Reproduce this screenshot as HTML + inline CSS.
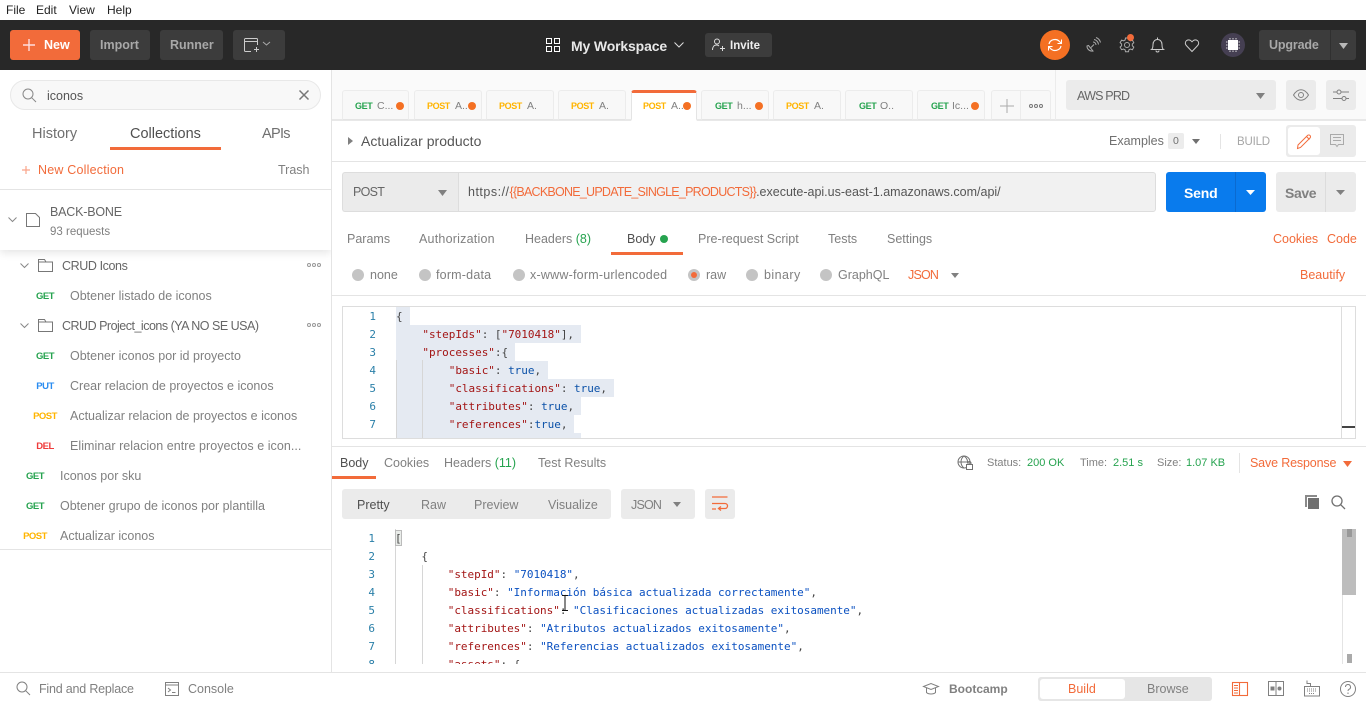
<!DOCTYPE html>
<html><head><meta charset="utf-8"><title>Postman</title>
<style>
*{box-sizing:border-box}
html,body{margin:0;padding:0;width:1366px;height:705px;overflow:hidden;background:#fff}
body{position:relative;font-family:"Liberation Sans",sans-serif;font-size:12.5px;color:#808080}
.t{position:absolute;white-space:nowrap;line-height:18px;height:18px}
.b{position:absolute}
svg{position:absolute;overflow:visible}
.m{font-weight:bold;font-size:9.5px;letter-spacing:-.5px;text-align:center;width:40px;margin-top:1px}
.h{font-size:9px !important;letter-spacing:-.4px}
.g{color:#26a34f}.y{color:#ffb400}.u{color:#2a8cf0}.r{color:#ef3b3b}
.o{color:#f26b3a}
.tab{position:absolute;top:90px;height:30px;background:#f8f8f8;border:1px solid #ececec;border-bottom:1px solid #e4e4e4;border-radius:3px 3px 0 0}
.dot{position:absolute;width:8px;height:8px;border-radius:50%;background:#f47023;top:102px}
.rad{position:absolute;width:12px;height:12px;border-radius:50%;background:#c4c4c4;top:269px}
.c{position:absolute;font-family:"DejaVu Sans Mono","Liberation Mono",monospace;font-size:11px;letter-spacing:-.03px;line-height:18px;white-space:pre;height:18px;transform:translateY(1px)}
.n{position:absolute;font-family:"DejaVu Sans Mono","Liberation Mono",monospace;font-size:11px;line-height:18px;text-align:right;width:20px;color:#2a7fa8;transform:translateY(1px)}
.k{color:#a31515}.s{color:#0b51c1}.v{color:#0b51a8}.p{color:#444}
.sel{position:absolute;background:#e5eaf2;height:18px}
</style></head><body>

<!-- menu -->
<div class="t" style="left:6px;top:1px;color:#222;font-size:12px">File</div>
<div class="t" style="left:36px;top:1px;color:#222;font-size:12px">Edit</div>
<div class="t" style="left:69px;top:1px;color:#222;font-size:12px">View</div>
<div class="t" style="left:107px;top:1px;color:#222;font-size:12px">Help</div>

<!-- header -->
<div class="b" style="left:0;top:20px;width:1366px;height:50px;background:#282828"></div>
<div class="b" style="left:10px;top:30px;width:70px;height:30px;background:#f26b3a;border-radius:3px"></div>
<svg style="left:23px;top:39px" width="12" height="12"><path d="M6 0V12M0 6H12" stroke="#fdd" stroke-width="1.400"/></svg>
<div class="t" style="left:44px;top:36px;color:#fff;font-weight:bold;font-size:12.500px">New</div>
<div class="b" style="left:90px;top:30px;width:60px;height:30px;background:#3c3c3c;border-radius:3px"></div>
<div class="t" style="left:100px;top:36px;color:#a8a8a8;font-weight:bold;font-size:12.500px">Import</div>
<div class="b" style="left:160px;top:30px;width:63px;height:30px;background:#3c3c3c;border-radius:3px"></div>
<div class="t" style="left:170px;top:36px;color:#a8a8a8;font-weight:bold;font-size:12.500px">Runner</div>
<div class="b" style="left:233px;top:30px;width:52px;height:30px;background:#3c3c3c;border-radius:3px"></div>
<svg style="left:244px;top:38px" width="34" height="14" fill="none" stroke="#ccc"><path d="M7 13.500H1.500a1 1 0 0 1-1-1V1.500a1 1 0 0 1 1-1h11a1 1 0 0 1 1 1V7M.5 3.500h13M10 11.500h5M12.500 9v5"/><path d="M19 4l3.500 3 3.500-3" stroke="#aaa"/></svg>

<svg style="left:546px;top:38px" width="14" height="14" fill="none" stroke="#fff"><rect x=".5" y=".5" width="5" height="5"/><rect x="8.500" y=".5" width="5" height="5"/><rect x=".5" y="8.500" width="5" height="5"/><rect x="8.500" y="8.500" width="5" height="5"/></svg>
<div class="t" style="left:571px;top:37px;color:#e8e8e8;font-weight:bold;font-size:14px;letter-spacing:-.15px">My Workspace</div>
<svg style="left:674px;top:42px" width="10" height="6" fill="none" stroke="#ddd"><path d="M.5.5l4.500 4.500 4.500-4.500"/></svg>
<div class="b" style="left:705px;top:33px;width:67px;height:24px;background:#3c3c3c;border-radius:3px"></div>
<svg style="left:712px;top:38px" width="14" height="14" fill="none" stroke="#ddd"><circle cx="5" cy="3.500" r="2.500"/><path d="M.5 12c0-3 1.500-5 4-5 1 0 2 .4 2.500 1M10.500 8v5M8 10.500h5"/></svg>
<div class="t" style="left:730px;top:37px;color:#eee;font-weight:bold;font-size:11.500px">Invite</div>

<div class="b" style="left:1040px;top:30px;width:30px;height:30px;border-radius:50%;background:#f47023"></div>
<svg style="left:1047px;top:38px" width="16" height="14" fill="none" stroke="#fff" stroke-width="1.200"><path d="M2 6a6 5.500 0 0 1 10.500-2.500L14 5M14 8a6 5.500 0 0 1-10.500 2.500L2 9"/><path d="M14.500 1.500V5.500H10.500M1.500 12.500V8.500H5.500" stroke-width="1"/></svg>
<svg style="left:1085px;top:37px" width="16" height="16" fill="none" stroke="#aaa"><path d="M2 9a5 5 0 0 0 6 5L3.500 8.500zM6 10.500l3-3"/><path d="M8 5a3 3 0 0 1 3 3M9 2.500a5.500 5.500 0 0 1 4.500 5M11 .5a7 7 0 0 1 4.500 5"/></svg>
<svg style="left:1119px;top:37px" width="16" height="16" viewBox="0 0 16 16" fill="none" stroke="#aaa"><circle cx="8" cy="8" r="2.500"/><path d="M6.500 1h3l.4 2 1.500.8 2-.7 1.400 2.600-1.500 1.300v1.800l1.500 1.300-1.400 2.600-2-.7-1.500.8-.4 2h-3l-.4-2-1.500-.8-2 .7L1.100 10.100l1.500-1.300V7L1.100 5.700 2.600 3.100l2 .7 1.500-.8z"/></svg>
<div class="b" style="left:1127px;top:34px;width:7px;height:7px;border-radius:50%;background:#f26b3a"></div>
<svg style="left:1151px;top:37px" width="13" height="16" fill="none" stroke="#ccc"><path d="M.5 12.500c1.500-1 1.500-3 1.500-5 0-3 2-5 4.500-5s4.500 2 4.500 5c0 2 0 4 1.500 5zM6.500 2.500V.5M5 13.500a1.500 1.500 0 0 0 3 0"/></svg>
<svg style="left:1185px;top:39px" width="14" height="13" fill="none" stroke="#ccc"><path d="M7 12.500L1.300 6.500a3.300 3.300 0 0 1 0-4.700 3.300 3.300 0 0 1 4.700 0L7 2.800l1-1a3.300 3.300 0 0 1 4.700 0 3.300 3.300 0 0 1 0 4.700z"/></svg>
<div class="b" style="left:1221px;top:33px;width:24px;height:24px;border-radius:50%;background:#453f52"></div>
<svg style="left:1226px;top:38px" width="14" height="14"><rect x="2" y="2" width="10" height="10" fill="#fff"/><path d="M4 0v1.500M7 0v1.500M10 0v1.500M4 12.500v1.500M7 12.500v1.500M10 12.500v1.500M0 4h1.500M0 7h1.500M0 10h1.500M12.500 4h1.500M12.500 7h1.500M12.500 10h1.500" stroke="#ddd"/></svg>
<div class="b" style="left:1259px;top:30px;width:97px;height:30px;background:#3c3c3c;border-radius:3px"></div>
<div class="b" style="left:1330px;top:30px;width:1px;height:30px;background:#303030"></div>
<div class="t" style="left:1269px;top:36px;color:#a8a8a8;font-weight:bold;font-size:12.500px;letter-spacing:-.15px">Upgrade</div>
<svg style="left:1339px;top:43px" width="9" height="6"><path d="M0 0H9L4.500 6z" fill="#b8b8b8"/></svg>

<!-- sidebar -->
<div class="b" style="left:331px;top:70px;width:1px;height:602px;background:#e4e4e4"></div>
<div class="b" style="left:10px;top:80px;width:311px;height:30px;background:#f8f8f8;border:1px solid #e8e8e8;border-radius:15px"></div>
<svg style="left:22px;top:88px" width="15" height="15" fill="none" stroke="#888"><circle cx="6" cy="6" r="5"/><path d="M9.800 9.800L14 14"/></svg>
<div class="t" style="left:47px;top:87px;color:#555;font-size:12.500px">iconos</div>
<svg style="left:299px;top:90px" width="10" height="10"><path d="M.5.5l9 9M9.500.5l-9 9" stroke="#777" stroke-width="1.500"/></svg>
<div class="t" style="left:32px;top:125px;font-size:14.500px;color:#707070">History</div>
<div class="t" style="left:130px;top:125px;font-size:14.500px;color:#505050">Collections</div>
<div class="t" style="left:262px;top:125px;font-size:14.500px;color:#707070;letter-spacing:-.7px">APIs</div>
<div class="b" style="left:110px;top:147px;width:111px;height:3px;background:#f26b3a"></div>
<svg style="left:22px;top:166px" width="8" height="8"><path d="M4 0V8M0 4H8" stroke="#f9a58a" stroke-width="1.200"/></svg>
<div class="t o" style="left:38px;top:161px;font-size:12.500px;letter-spacing:.2px">New Collection</div>
<div class="t" style="left:278px;top:161px;font-size:12.500px">Trash</div>
<div class="b" style="left:0;top:189px;width:331px;height:1px;background:#e4e4e4"></div>
<div class="b" style="left:0;top:190px;width:331px;height:60px;background:#fff;box-shadow:0 3px 8px rgba(0,0,0,.1);clip-path:inset(0 0 -14px 0)"></div>
<svg style="left:8px;top:217px" width="9" height="5" fill="none" stroke="#888"><path d="M.5.5l4 4 4-4"/></svg>
<svg style="left:26px;top:213px" width="14" height="14" fill="none" stroke="#777"><path d="M.5.500h9l4 4v9h-13z"/></svg>
<div class="t" style="left:50px;top:203px;font-size:12.500px;color:#666;letter-spacing:-.2px">BACK-BONE</div>
<div class="t" style="left:50px;top:223px;font-size:11.500px;color:#808080">93 requests</div>

<svg style="left:20px;top:263px" width="9" height="5" fill="none" stroke="#888"><path d="M.5.5l4 4 4-4"/></svg>
<svg style="left:38px;top:259px" width="15" height="13" fill="none" stroke="#777"><path d="M.5 12.500V.5h6l1.500 2.500h6.500v9.500zM.5 3h7.500"/></svg>
<div class="t" style="left:62px;top:257px;color:#666;letter-spacing:-.4px">CRUD Icons</div>
<svg style="left:307px;top:263px" width="15" height="4" fill="none" stroke="#999"><circle cx="2" cy="2" r="1.500"/><circle cx="7" cy="2" r="1.500"/><circle cx="12" cy="2" r="1.500"/></svg>
<div class="t m g" style="left:25px;top:287px">GET</div><div class="t" style="left:70px;top:287px">Obtener listado de iconos</div>
<svg style="left:20px;top:323px" width="9" height="5" fill="none" stroke="#888"><path d="M.5.5l4 4 4-4"/></svg>
<svg style="left:38px;top:319px" width="15" height="13" fill="none" stroke="#777"><path d="M.5 12.500V.5h6l1.500 2.500h6.500v9.500zM.5 3h7.500"/></svg>
<div class="t" style="left:62px;top:317px;color:#666;letter-spacing:-.5px">CRUD Project_icons (YA NO SE USA)</div>
<svg style="left:307px;top:323px" width="15" height="4" fill="none" stroke="#999"><circle cx="2" cy="2" r="1.500"/><circle cx="7" cy="2" r="1.500"/><circle cx="12" cy="2" r="1.500"/></svg>
<div class="t m g" style="left:25px;top:347px">GET</div><div class="t" style="left:70px;top:347px">Obtener iconos por id proyecto</div>
<div class="t m u" style="left:25px;top:377px">PUT</div><div class="t" style="left:70px;top:377px">Crear relacion de proyectos e iconos</div>
<div class="t m y" style="left:25px;top:407px">POST</div><div class="t" style="left:70px;top:407px">Actualizar relacion de proyectos e iconos</div>
<div class="t m r" style="left:25px;top:437px">DEL</div><div class="t" style="left:70px;top:437px;letter-spacing:.05px">Eliminar relacion entre proyectos e icon...</div>
<div class="t m g" style="left:15px;top:467px">GET</div><div class="t" style="left:60px;top:467px">Iconos por sku</div>
<div class="t m g" style="left:15px;top:497px">GET</div><div class="t" style="left:60px;top:497px">Obtener grupo de iconos por plantilla</div>
<div class="t m y" style="left:15px;top:527px">POST</div><div class="t" style="left:60px;top:527px">Actualizar iconos</div>
<div class="b" style="left:0;top:549px;width:331px;height:1px;background:#e4e4e4"></div>

<!-- tab strip -->
<div class="b" style="left:332px;top:70px;width:1034px;height:50px;background:#fafafa"></div>
<div class="b" style="left:332px;top:119px;width:1034px;height:2px;background:#e8e8e8"></div>
<div class="b" style="left:1055px;top:70px;width:1px;height:50px;background:#ececec"></div>
<div class="tab" style="left:342px;width:67px"></div>
<div class="tab" style="left:414px;width:68px"></div>
<div class="tab" style="left:486px;width:68px"></div>
<div class="tab" style="left:558px;width:68px"></div>
<div class="tab" style="left:631px;width:66px;background:#fff;border-color:#e4e4e4;border-top:3px solid #f26b3a;border-bottom:2px solid #fff;height:31px"></div>
<div class="tab" style="left:701px;width:68px"></div>
<div class="tab" style="left:773px;width:68px"></div>
<div class="tab" style="left:845px;width:68px"></div>
<div class="tab" style="left:917px;width:68px"></div>
<div class="tab" style="left:991px;width:60px"></div>
<div class="b" style="left:1020px;top:91px;width:1px;height:28px;background:#ececec"></div>
<svg style="left:1000px;top:99px" width="14" height="14"><path d="M7 0V14M0 7H14" stroke="#aaa"/></svg>
<svg style="left:1029px;top:104px" width="15" height="4" fill="none" stroke="#777"><circle cx="2" cy="2" r="1.500"/><circle cx="7" cy="2" r="1.500"/><circle cx="12" cy="2" r="1.500"/></svg>
<div class="t g h" style="left:355px;top:97px;font-weight:bold">GET</div><div class="t" style="left:377px;top:97px;font-size:10.500px">C...</div><div class="dot" style="left:396px"></div>
<div class="t y h" style="left:427px;top:97px;font-weight:bold">POST</div><div class="t" style="left:455px;top:97px;font-size:10.500px">A..</div><div class="dot" style="left:468px"></div>
<div class="t y h" style="left:499px;top:97px;font-weight:bold">POST</div><div class="t" style="left:527px;top:97px;font-size:10.500px">A.</div>
<div class="t y h" style="left:571px;top:97px;font-weight:bold">POST</div><div class="t" style="left:599px;top:97px;font-size:10.500px">A.</div>
<div class="t y h" style="left:643px;top:97px;font-weight:bold">POST</div><div class="t" style="left:671px;top:97px;font-size:10.500px">A..</div><div class="dot" style="left:683px"></div>
<div class="t g h" style="left:715px;top:97px;font-weight:bold">GET</div><div class="t" style="left:737px;top:97px;font-size:10.500px">h...</div><div class="dot" style="left:755px"></div>
<div class="t y h" style="left:786px;top:97px;font-weight:bold">POST</div><div class="t" style="left:814px;top:97px;font-size:10.500px">A.</div>
<div class="t g h" style="left:859px;top:97px;font-weight:bold">GET</div><div class="t" style="left:880px;top:97px;font-size:10.500px">O..</div>
<div class="t g h" style="left:931px;top:97px;font-weight:bold">GET</div><div class="t" style="left:952px;top:97px;font-size:10.500px">Ic...</div><div class="dot" style="left:971px"></div>

<div class="b" style="left:1066px;top:80px;width:210px;height:30px;background:#ebebeb;border-radius:3px"></div>
<div class="t" style="left:1077px;top:87px;color:#666;letter-spacing:-.8px">AWS PRD</div>
<svg style="left:1256px;top:93px" width="9" height="6"><path d="M0 0H9L4.500 6z" fill="#808080"/></svg>
<div class="b" style="left:1286px;top:80px;width:30px;height:30px;background:#ebebeb;border-radius:3px"></div>
<svg style="left:1293px;top:89px" width="16" height="12" fill="none" stroke="#808080"><path d="M.5 6C3 2 5.500.8 8 .8s5 1.200 7.500 5.200C13 10 10.500 11.200 8 11.200S3 10 .5 6z"/><circle cx="8" cy="6" r="2.500"/></svg>
<div class="b" style="left:1326px;top:80px;width:30px;height:30px;background:#ebebeb;border-radius:3px"></div>
<svg style="left:1333px;top:89px" width="16" height="13" fill="none" stroke="#808080"><path d="M0 3h4M8 3h8M0 9.500h9M13 9.500h3"/><circle cx="6" cy="3" r="2"/><circle cx="11" cy="9.500" r="2"/></svg>

<!-- name row -->
<svg style="left:348px;top:137px" width="5" height="8"><path d="M0 0V8L5 4z" fill="#808080"/></svg>
<div class="t" style="left:361px;top:132px;font-size:14px;color:#555;letter-spacing:.03px">Actualizar producto</div>
<div class="t" style="left:1109px;top:132px;color:#707070">Examples</div>
<div class="b" style="left:1168px;top:133px;width:16px;height:16px;background:#ececec;border-radius:2px"></div>
<div class="t" style="left:1173px;top:132px;font-size:10.500px;color:#707070">0</div>
<svg style="left:1192px;top:139px" width="8" height="5"><path d="M0 0H8L4 5z" fill="#707070"/></svg>
<div class="b" style="left:1220px;top:134px;width:1px;height:15px;background:#e4e4e4"></div>
<div class="t" style="left:1237px;top:133px;font-size:11.500px;color:#a6a6a6;letter-spacing:-.2px">BUILD</div>
<div class="b" style="left:1286px;top:125px;width:70px;height:32px;background:#ebebeb;border-radius:3px"></div>
<div class="b" style="left:1288px;top:127px;width:32px;height:28px;background:#fff;border-radius:3px"></div>
<svg style="left:1297px;top:134px" width="15" height="15" fill="none" stroke="#f26b3a"><path d="M1 11L10.500 1.500a1.500 1.500 0 0 1 2.500 2.500L3.500 13.500.5 14.500zM9.500 2.500l3 3"/></svg>
<svg style="left:1330px;top:134px" width="14" height="14" fill="none" stroke="#aaa"><path d="M.5.500h13v10h-5l-1.500 2-1.500-2h-5zM3 3.500h8M3 6.500h8"/></svg>
<div class="b" style="left:332px;top:161px;width:1034px;height:1px;background:#e4e4e4"></div>

<!-- url row -->
<div class="b" style="left:342px;top:172px;width:116px;height:40px;background:#ebebeb;border:1px solid #ddd;border-right:0;border-radius:3px 0 0 3px"></div>
<div class="t" style="left:353px;top:183px;color:#666;letter-spacing:-.7px">POST</div>
<svg style="left:438px;top:190px" width="9" height="6"><path d="M0 0H9L4.500 6z" fill="#808080"/></svg>
<div class="b" style="left:458px;top:172px;width:698px;height:40px;background:#f1f1f1;border:1px solid #ddd;border-radius:0 3px 3px 0"></div>
<div class="t" style="left:468px;top:183px;color:#555;font-size:12.500px"><span style="letter-spacing:.5px">https://</span><span class="o" style="letter-spacing:-.75px">{{BACKBONE_UPDATE_SINGLE_PRODUCTS}}</span>.execute-api.us-east-1.amazonaws.com/api/</div>
<div class="b" style="left:1166px;top:172px;width:100px;height:40px;background:#097bed;border-radius:3px"></div>
<div class="b" style="left:1235px;top:172px;width:1px;height:40px;background:#0a6ad0"></div>
<div class="t" style="left:1184px;top:184px;color:#fff;font-weight:bold;font-size:14px;letter-spacing:-.2px">Send</div>
<svg style="left:1246px;top:190px" width="9" height="5"><path d="M0 0H9L4.500 5z" fill="#fff"/></svg>
<div class="b" style="left:1276px;top:172px;width:80px;height:40px;background:#ebebeb;border-radius:3px"></div>
<div class="b" style="left:1325px;top:172px;width:1px;height:40px;background:#dcdcdc"></div>
<div class="t" style="left:1285px;top:184px;color:#808080;font-weight:bold;font-size:14px;letter-spacing:-.4px">Save</div>
<svg style="left:1336px;top:190px" width="9" height="5"><path d="M0 0H9L4.500 5z" fill="#808080"/></svg>

<!-- request tabs -->
<div class="t" style="left:347px;top:230px">Params</div>
<div class="t" style="left:419px;top:230px;letter-spacing:.22px">Authorization</div>
<div class="t" style="left:525px;top:230px">Headers <span class="g">(8)</span></div>
<div class="t" style="left:627px;top:230px;color:#505050">Body</div>
<div class="b" style="left:660px;top:235px;width:8px;height:8px;border-radius:50%;background:#26a34f"></div>
<div class="t" style="left:698px;top:230px">Pre-request Script</div>
<div class="t" style="left:828px;top:230px">Tests</div>
<div class="t" style="left:887px;top:230px">Settings</div>
<div class="t o" style="left:1273px;top:230px">Cookies</div>
<div class="t o" style="left:1327px;top:230px">Code</div>
<div class="b" style="left:611px;top:252px;width:72px;height:3px;background:#f26b3a"></div>

<div class="rad" style="left:352px"></div><div class="t" style="left:370px;top:266px">none</div>
<div class="rad" style="left:419px"></div><div class="t" style="left:436px;top:266px;letter-spacing:.2px">form-data</div>
<div class="rad" style="left:513px"></div><div class="t" style="left:530px;top:266px;letter-spacing:.22px">x-www-form-urlencoded</div>
<div class="rad" style="left:688px"></div><div class="b" style="left:691px;top:272px;width:6px;height:6px;border-radius:50%;background:#f26b3a"></div><div class="t" style="left:706px;top:266px">raw</div>
<div class="rad" style="left:746px"></div><div class="t" style="left:764px;top:266px;letter-spacing:.45px">binary</div>
<div class="rad" style="left:820px"></div><div class="t" style="left:838px;top:266px">GraphQL</div>
<div class="t o" style="left:908px;top:266px;letter-spacing:-.8px">JSON</div>
<svg style="left:951px;top:273px" width="8" height="5"><path d="M0 0H8L4 5z" fill="#808080"/></svg>
<div class="t o" style="left:1300px;top:266px">Beautify</div>
<div class="b" style="left:332px;top:295px;width:1034px;height:1px;background:#e4e4e4"></div>

<!-- request editor -->
<div class="b" style="left:342px;top:306px;width:1014px;height:133px;border:1px solid #ddd;overflow:hidden;background:#fff">
 <div class="sel" style="left:53px;top:0;width:14px"></div>
 <div class="sel" style="left:53px;top:18px;width:185px"></div>
 <div class="sel" style="left:53px;top:36px;width:119px"></div>
 <div class="sel" style="left:53px;top:54px;width:152px"></div>
 <div class="sel" style="left:53px;top:72px;width:218px"></div>
 <div class="sel" style="left:53px;top:90px;width:185px"></div>
 <div class="sel" style="left:53px;top:108px;width:178px"></div>
 <div class="sel" style="left:53px;top:126px;width:185px"></div>
 <div class="b" style="left:53px;top:53px;width:1px;height:80px;background:#d6d6d6"></div>
 <div class="b" style="left:79px;top:53px;width:1px;height:80px;background:#d6d6d6"></div>
 <div class="n" style="left:13px;top:0">1</div><div class="n" style="left:13px;top:18px">2</div><div class="n" style="left:13px;top:36px">3</div><div class="n" style="left:13px;top:54px">4</div><div class="n" style="left:13px;top:72px">5</div><div class="n" style="left:13px;top:90px">6</div><div class="n" style="left:13px;top:108px">7</div><div class="n" style="left:13px;top:126px">8</div>
 <div class="c p" style="left:53px;top:0">{</div>
 <div class="c p" style="left:53px;top:18px">    <span class="k">"stepIds"</span>: [<span class="k">"7010418"</span>],</div>
 <div class="c p" style="left:53px;top:36px">    <span class="k">"processes"</span>:{</div>
 <div class="c p" style="left:53px;top:54px">        <span class="k">"basic"</span>: <span class="v">true</span>,</div>
 <div class="c p" style="left:53px;top:72px">        <span class="k">"classifications"</span>: <span class="v">true</span>,</div>
 <div class="c p" style="left:53px;top:90px">        <span class="k">"attributes"</span>: <span class="v">true</span>,</div>
 <div class="c p" style="left:53px;top:108px">        <span class="k">"references"</span>:<span class="v">true</span>,</div>
 <div class="c p" style="left:53px;top:126px">        <span class="k">"assets"</span>: <span class="v">true</span></div>
 <div class="b" style="left:998px;top:0;width:1px;height:133px;background:#ddd"></div>
 <div class="b" style="left:999px;top:119px;width:13px;height:2px;background:#444"></div>
</div>

<!-- response -->
<div class="b" style="left:332px;top:446px;width:1034px;height:1px;background:#e4e4e4"></div>
<div class="t" style="left:340px;top:454px;color:#505050">Body</div>
<div class="t" style="left:384px;top:454px">Cookies</div>
<div class="t" style="left:444px;top:454px">Headers <span class="g">(11)</span></div>
<div class="t" style="left:538px;top:454px">Test Results</div>
<div class="b" style="left:332px;top:476px;width:44px;height:3px;background:#f26b3a"></div>
<svg style="left:957px;top:455px" width="16" height="15" fill="none" stroke="#707070"><circle cx="7" cy="7" r="6"/><path d="M1 7h12M7 1c-4 3-4 9 0 12M7 1c3 2 4 5 3.500 7"/><rect x="9.500" y="9.500" width="6" height="5" fill="#fff"/><path d="M11 9.500V8a1.500 1.500 0 0 1 3 0v1.500"/></svg>
<div class="t" style="left:987px;top:454px;font-size:11px">Status:</div><div class="t g" style="left:1027px;top:454px;font-size:11px">200 OK</div>
<div class="t" style="left:1080px;top:454px;font-size:11px">Time:</div><div class="t g" style="left:1113px;top:454px;font-size:11px">2.51 s</div>
<div class="t" style="left:1157px;top:454px;font-size:11px">Size:</div><div class="t g" style="left:1186px;top:454px;font-size:11px">1.07 KB</div>
<div class="b" style="left:1239px;top:453px;width:1px;height:20px;background:#e4e4e4"></div>
<div class="t o" style="left:1250px;top:454px;letter-spacing:-.15px">Save Response</div>
<svg style="left:1343px;top:461px" width="9" height="6"><path d="M0 0H9L4.500 6z" fill="#f26b3a"/></svg>

<div class="b" style="left:342px;top:489px;width:269px;height:30px;background:#ebebeb;border-radius:3px"></div>
<div class="t" style="left:357px;top:496px;color:#505050">Pretty</div>
<div class="t" style="left:421px;top:496px">Raw</div>
<div class="t" style="left:474px;top:496px">Preview</div>
<div class="t" style="left:548px;top:496px">Visualize</div>
<div class="b" style="left:621px;top:489px;width:74px;height:30px;background:#ebebeb;border-radius:3px"></div>
<div class="t" style="left:631px;top:496px;letter-spacing:-.8px">JSON</div>
<svg style="left:673px;top:502px" width="8" height="5"><path d="M0 0H8L4 5z" fill="#808080"/></svg>
<div class="b" style="left:705px;top:489px;width:30px;height:30px;background:#ebebeb;border-radius:3px"></div>
<svg style="left:712px;top:496px" width="16" height="16" fill="none" stroke="#f26b3a" stroke-width="1.300"><path d="M0 1h15.500M0 7.500h13a2.500 2.500 0 0 1 0 5H7M0 13h4"/><path d="M9 10.500l-2.500 2 2.500 2"/></svg>
<svg style="left:1305px;top:495px" width="15" height="15"><path d="M1 12V1H12" fill="none" stroke="#8a8a8a" stroke-width="2"/><rect x="3" y="3" width="11" height="11" fill="#707070"/></svg>
<svg style="left:1331px;top:495px" width="15" height="15" fill="none" stroke="#707070" stroke-width="1.300"><circle cx="6" cy="6" r="5"/><path d="M9.800 9.800L14 14"/></svg>

<!-- response editor -->
<div class="b" style="left:342px;top:529px;width:1014px;height:135px;overflow:hidden">
 <div class="b" style="left:53px;top:0;width:1px;height:135px;background:#d6d6d6"></div>
 <div class="b" style="left:80px;top:36px;width:1px;height:99px;background:#d6d6d6"></div>
 <div class="b" style="left:53px;top:1px;width:7px;height:16px;background:#e9ece9;border:1px solid #bbb"></div>
 <div class="n" style="left:13px;top:0">1</div><div class="n" style="left:13px;top:18px">2</div><div class="n" style="left:13px;top:36px">3</div><div class="n" style="left:13px;top:54px">4</div><div class="n" style="left:13px;top:72px">5</div><div class="n" style="left:13px;top:90px">6</div><div class="n" style="left:13px;top:108px">7</div><div class="n" style="left:13px;top:126px">8</div>
 <div class="c p" style="left:53px;top:0">[</div>
 <div class="c p" style="left:53px;top:18px">    {</div>
 <div class="c p" style="left:53px;top:36px">        <span class="k">"stepId"</span>: <span class="s">"7010418"</span>,</div>
 <div class="c p" style="left:53px;top:54px">        <span class="k">"basic"</span>: <span class="s">"Información básica actualizada correctamente"</span>,</div>
 <div class="c p" style="left:53px;top:72px">        <span class="k">"classifications"</span>: <span class="s">"Clasificaciones actualizadas exitosamente"</span>,</div>
 <div class="c p" style="left:53px;top:90px">        <span class="k">"attributes"</span>: <span class="s">"Atributos actualizados exitosamente"</span>,</div>
 <div class="c p" style="left:53px;top:108px">        <span class="k">"references"</span>: <span class="s">"Referencias actualizados exitosamente"</span>,</div>
 <div class="c p" style="left:53px;top:126px">        <span class="k">"assets"</span>: {</div>
 <div class="b" style="left:1000px;top:0;width:14px;height:66px;background:#bdbdbd"></div>
 <div class="b" style="left:1005px;top:0;width:5px;height:8px;background:#999"></div>
 <div class="b" style="left:1000px;top:66px;width:1px;height:69px;background:#e4e4e4"></div>
 <div class="b" style="left:1005px;top:125px;width:5px;height:9px;background:#aaa"></div>
</div>
<svg style="left:561px;top:595px" width="8" height="16" fill="none" stroke="#111"><path d="M1 .5h6M4 .5v15M1 15.500h6"/></svg>

<!-- footer -->
<div class="b" style="left:0;top:672px;width:1366px;height:1px;background:#e4e4e4"></div>
<svg style="left:16px;top:681px" width="15" height="15" fill="none" stroke="#808080"><circle cx="6" cy="6" r="5"/><path d="M9.800 9.800L14 14"/></svg>
<div class="t" style="left:39px;top:680px;letter-spacing:-.2px">Find and Replace</div>
<svg style="left:165px;top:682px" width="14" height="14" fill="none" stroke="#808080"><rect x=".5" y=".5" width="13" height="13"/><path d="M.5 3h13M3 6l2.500 2L3 10M7 10.500h3.500"/></svg>
<div class="t" style="left:188px;top:680px">Console</div>
<svg style="left:923px;top:683px" width="16" height="12" fill="none" stroke="#808080"><path d="M.5 3.500L8 .5l7.500 3L8 6.500zM3.500 5v4.500c2 2 7 2 9 0V5"/></svg>
<div class="t" style="left:949px;top:680px;font-weight:bold;color:#808080;font-size:12px">Bootcamp</div>
<div class="b" style="left:1038px;top:677px;width:174px;height:24px;background:#e6e6e6;border-radius:3px"></div>
<div class="b" style="left:1040px;top:679px;width:85px;height:20px;background:#fff;border-radius:3px"></div>
<div class="t o" style="left:1068px;top:680px">Build</div>
<div class="t" style="left:1147px;top:680px">Browse</div>
<svg style="left:1232px;top:682px" width="16" height="14" fill="none" stroke="#f26b3a" stroke-width="1.100"><rect x=".5" y=".5" width="15" height="13"/><path d="M7.500.5v13M2 3.500h4M2 6h4M2 8.500h4M2 11h4"/></svg>
<svg style="left:1268px;top:681px" width="16" height="15" fill="none" stroke="#808080"><rect x=".5" y=".5" width="15" height="14"/><path d="M8 .5v14"/><rect x="3" y="6" width="3" height="3" fill="#808080"/><circle cx="11.500" cy="7.500" r="1.500" fill="#808080"/></svg>
<svg style="left:1304px;top:680px" width="16" height="17" fill="none" stroke="#808080"><path d="M3 .5v3h3.500v3"/><rect x=".5" y="6.500" width="15" height="9.500"/><path d="M3 9h10M3 11h10M5 13.500h6" stroke-dasharray="1 1"/></svg>
<svg style="left:1340px;top:681px" width="16" height="16" fill="none" stroke="#808080"><circle cx="8" cy="8" r="7.500"/><path d="M5.500 6a2.500 2.500 0 1 1 3.500 2.300c-.7.400-1 .8-1 1.700"/><path d="M8 11.500v1.500"/></svg>
</body></html>
